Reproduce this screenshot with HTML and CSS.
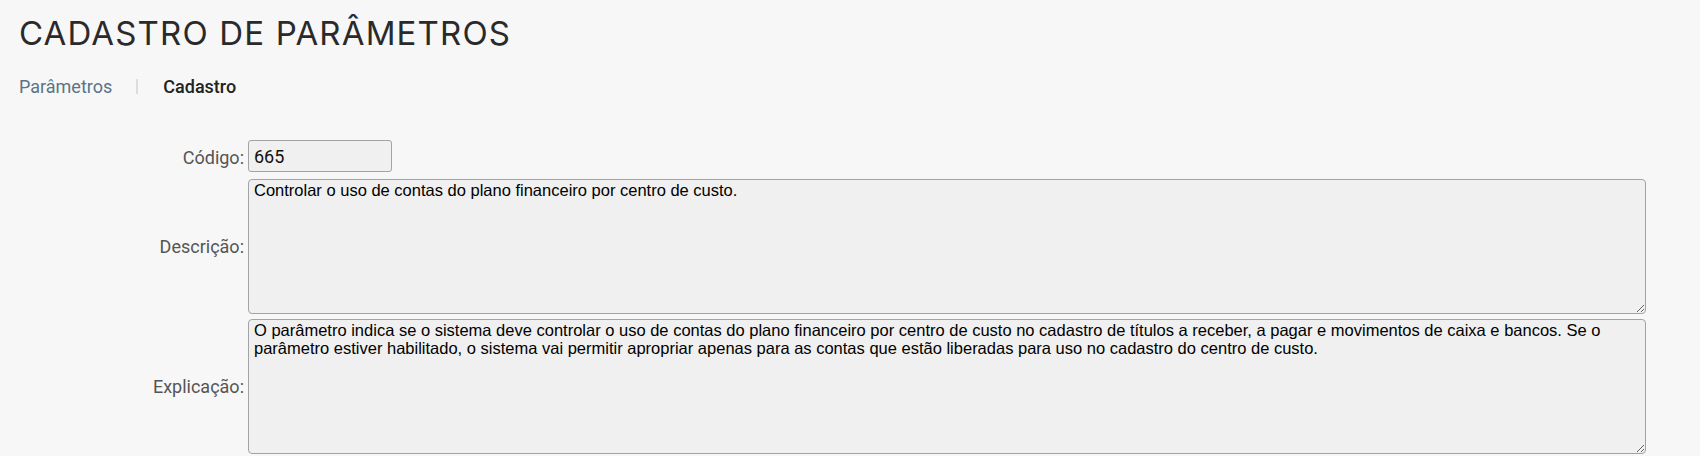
FILE: index.html
```html
<!DOCTYPE html>
<html lang="pt-BR">
<head>
  <meta charset="UTF-8" />
  <meta name="viewport" content="width=device-width, initial-scale=1.0"/>
  <title>Cadastro de Parâmetros</title>
  <link rel="stylesheet" href="styles.css">
</head>
<body>

  <div class="page">
    <h1 class="page-title">CADASTRO DE PARÂMETROS</h1>

    <nav class="breadcrumb">
      <a href="#" class="crumb-link">Parâmetros</a>
      <span class="crumb-sep"></span>
      <span class="crumb-current">Cadastro</span>
    </nav>

    <form class="param-form">
      <label class="field-label" for="codigo">Código:</label>
      <div class="field field-code">
        <input type="text" id="codigo" class="input-code" value="665" readonly />
      </div>

      <label class="field-label" for="descricao">Descrição:</label>
      <div class="field">
        <textarea id="descricao" class="text-box" readonly>Controlar o uso de contas do plano financeiro por centro de custo.</textarea>
      </div>

      <label class="field-label" for="explicacao">Explicação:</label>
      <div class="field">
        <textarea id="explicacao" class="text-box" readonly>O parâmetro indica se o sistema deve controlar o uso de contas do plano financeiro por centro de custo no cadastro de títulos a receber, a pagar e movimentos de caixa e bancos. Se o parâmetro estiver habilitado, o sistema vai permitir apropriar apenas para as contas que estão liberadas para uso no cadastro do centro de custo.</textarea>
      </div>
    </form>
  </div>

</body>
</html>
```

FILE: styles.css
```css
:root {
  --page-bg: #f7f7f7;
  --title: #2a2a2a;
  --link: #58748a;
  --label: #555555;
  --box-bg: #f0f0f0;
  --box-border: #a3a3a3;
  --sep: #dddddd;
}

* {
  box-sizing: border-box;
  margin: 0;
  padding: 0;
}

html, body {
  height: 100%;
}

body {
  background: var(--page-bg);
  font-family: Roboto, "Liberation Sans", sans-serif;
  overflow: hidden;
}

.page {
  padding: 13px 54px 0 19px;
}

/* Header */
.page-title {
  font-family: Inter, "Liberation Sans", sans-serif;
  font-weight: 400;
  font-size: 33px;
  letter-spacing: 1.15px;
  line-height: 40px;
  color: var(--title);
}

.breadcrumb {
  display: flex;
  align-items: center;
  margin-top: 21px;
  height: 24px;
  font-size: 18px;
}

.crumb-link {
  color: var(--link);
  text-decoration: none;
}

.crumb-sep {
  width: 2px;
  height: 15px;
  margin: 0 25px 0 24px;
  background: var(--sep);
}

.crumb-current {
  font-weight: 500;
  color: #222;
}

/* Form */
.param-form {
  display: grid;
  grid-template-columns: 225px 1fr;
  column-gap: 4px;
  row-gap: 5px;
  align-items: center;
  margin-top: 42px;
}

.field-label {
  text-align: right;
  font-size: 18px;
  color: var(--label);
}

.field-code {
  padding-bottom: 2px;
}

.input-code {
  display: block;
  width: 144px;
  height: 32px;
  padding: 0 5px;
  border: 1px solid var(--box-border);
  border-radius: 3px;
  background: var(--box-bg);
  font-family: Roboto, sans-serif;
  font-size: 18px;
  color: #111;
  outline: none;
}

.text-box {
  display: block;
  width: 100%;
  height: 135px;
  padding: 1px 5px;
  border: 1px solid var(--box-border);
  border-radius: 4px;
  background: var(--box-bg);
  font-family: "Liberation Sans", Arial, sans-serif;
  font-size: 16.5px;
  line-height: 18px;
  color: #000;
  resize: both;
  outline: none;
}
```
